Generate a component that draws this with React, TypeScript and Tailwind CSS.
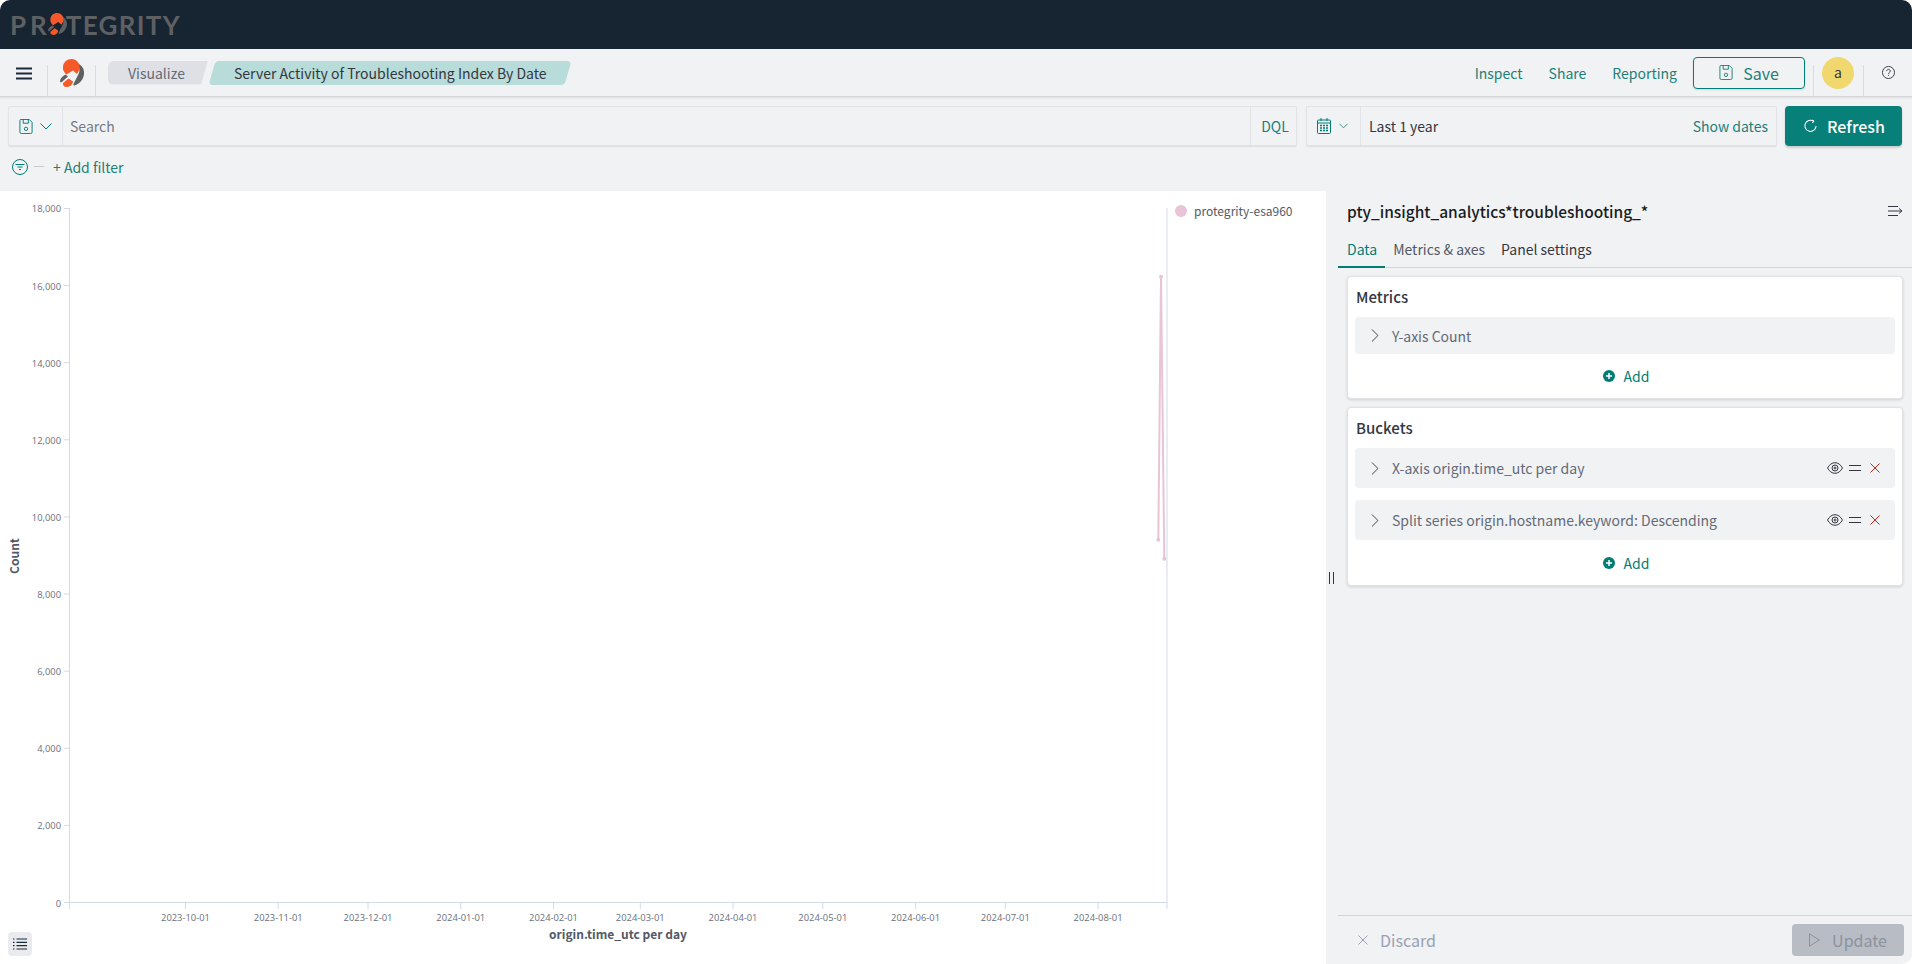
const yTicks = [0, 2000, 4000, 6000, 8000, 10000, 12000, 14000, 16000, 18000];

const xTicks = [
  { label: '2023-10-01', days: 0 },
  { label: '2023-11-01', days: 31 },
  { label: '2023-12-01', days: 61 },
  { label: '2024-01-01', days: 92 },
  { label: '2024-02-01', days: 123 },
  { label: '2024-03-01', days: 152 },
  { label: '2024-04-01', days: 183 },
  { label: '2024-05-01', days: 213 },
  { label: '2024-06-01', days: 244 },
  { label: '2024-07-01', days: 274 },
  { label: '2024-08-01', days: 305 },
];

const yPos = (v: number) => 902 - (v / 18000) * 694;
const xPos = (d: number) => 185.5 + d * 2.992;

const LogoMark = ({ className }: { className: string }) => (
  <svg viewBox="0 0 24 28" className={className}>
    <path d="M17 4C22 6 24.500 10 24 15C23.500 20 20 25 14.500 26.500C13.500 26.800 13 26 13.500 25L19 14C20 11 19 7 17 4z" fill="#5f6062" />
    <path d="M11.500 0C16.500 0 20 4 19.500 9C19.200 11.500 18 13.500 17 15L13 11.500L6.500 15.500C4 13.500 2.500 11 3 7.500C3.500 3 7 0 11.500 0z" fill="#f5592a" />
    <path d="M5.500 15.500L8 17.500L1.800 23C.5 24-.3 22.500.2 21C.8 19 3 17 5.500 15.500z" fill="#5f6062" />
    <path d="M3 24L8.500 19.500L13 22.500C12.500 25.500 10 28 6.500 28C4 28 2.500 26 3 24z" fill="#f5592a" />
  </svg>
);

const FloppyIcon = ({ className }: { className: string }) => (
  <svg viewBox="0 0 14 16" className={className} fill="none" stroke="currentColor" strokeWidth="1">
    <path d="M.5 1.500a1 1 0 0 1 1-1h9l3 3v10.500a1.500 1.500 0 0 1-1.500 1.500H2a1.500 1.500 0 0 1-1.500-1.500z" />
    <path d="M4 .5v4h5.500v-4" />
    <circle cx="7" cy="10.500" r="1.800" />
  </svg>
);

const ChevronDownThin = ({ className }: { className: string }) => (
  <svg viewBox="0 0 12 7" className={className} fill="none" stroke="currentColor" strokeWidth="1">
    <path d="M.5.5L6 6l5.500-5.500" />
  </svg>
);

const ChevronRightThin = () => (
  <svg viewBox="0 0 8 14" className="w-[8px] h-[13px] text-[#343741] shrink-0" fill="none" stroke="currentColor" strokeWidth="1">
    <path d="M.7.5L7.200 7L.7 13.500" />
  </svg>
);

const CalendarIcon = () => (
  <svg viewBox="0 0 14 16" className="w-[14px] h-[16px]" fill="none" stroke="currentColor" strokeWidth="1">
    <rect x=".5" y="2" width="13" height="13.500" rx="1" />
    <path d="M.5 5h13M4 0v3M10 0v3" />
    <path d="M3 7.500h2M6 7.500h2M9 7.500h2M3 10h2M6 10h2M9 10h2M3 12.500h2M6 12.500h2M9 12.500h2" strokeWidth="1.300" />
  </svg>
);

const RefreshIcon = () => (
  <svg viewBox="0 0 14 14" className="w-[13px] h-[14px]" fill="none" stroke="currentColor" strokeWidth="1.100">
    <path d="M10 1.600A6 6 0 1 0 13 7" />
    <path d="M9 .3l1.500 1.500L9 3.600" />
  </svg>
);

const FilterCircle = () => (
  <svg viewBox="0 0 16 16" className="w-[16px] h-[16px] text-[#017d73]" fill="none" stroke="currentColor" strokeWidth="1">
    <circle cx="8" cy="8" r="7.500" />
    <path d="M3.500 5.500h9M5.500 8h5M7 10.500h2" />
  </svg>
);

const PlusCircle = () => (
  <svg viewBox="0 0 12 12" className="w-[12px] h-[12px]">
    <circle cx="6" cy="6" r="6" fill="#017d73" />
    <path d="M3 6h6M6 3v6" stroke="#fff" strokeWidth="1.500" />
  </svg>
);

const CollapseIcon = () => (
  <svg viewBox="0 0 15 10" className="w-[15px] h-[10px] text-[#343741]" fill="none" stroke="currentColor" strokeWidth="1">
    <path d="M0 .5h10M0 9.500h10M0 5h14M11 2.500L14 5l-3 2.500" />
  </svg>
);

const EyeIcon = () => (
  <svg viewBox="0 0 16 12" className="w-[16px] h-[12px] text-[#343741]" fill="none" stroke="currentColor" strokeWidth="1">
    <path d="M.5 6C2.500 2.500 5 .7 8 .7S13.500 2.500 15.500 6C13.500 9.500 11 11.300 8 11.300S2.500 9.500.5 6z" />
    <circle cx="8" cy="6" r="3" />
    <circle cx="8" cy="6" r="1" />
  </svg>
);

const CrossIcon = ({ className }: { className: string }) => (
  <svg viewBox="0 0 10 10" className={className} fill="none" stroke="currentColor" strokeWidth="1">
    <path d="M.5.5l9 9M9.500.5l-9 9" />
  </svg>
);

const ListIcon = () => (
  <svg viewBox="0 0 14 12" className="w-[14px] h-[12px] text-[#1a2a3a]" fill="none" stroke="currentColor" strokeWidth="1.200">
    <path d="M3.500 1H14M3.500 4.300H14M3.500 7.700H14M3.500 11H14" />
    <path d="M0 1h1.500M0 4.300h1.500M0 7.700h1.500M0 11h1.500" />
  </svg>
);

const AddButton = () => (
  <div className="flex-1 flex items-center justify-center gap-[9px] pl-[1px] text-[#017d73]">
    <PlusCircle />
    <span className="text-[14px] leading-[20px]">Add</span>
  </div>
);

const AggRow = ({ label, detail, actions, height }: { label: string; detail: string; actions?: boolean; height: string }) => (
  <div className={`flex items-center bg-[#f1f2f4] rounded-[4px] pl-[16px] pr-[15px] ${height}`}>
    <ChevronRightThin />
    <span className="ml-[13px] text-[14px] leading-[20px] text-[#646a77]">
      {label} {detail}
    </span>
    {actions && (
      <div className="ml-auto flex items-center">
        <EyeIcon />
        <svg viewBox="0 0 12 6" className="w-[12px] h-[6px] ml-[6px] text-[#343741]" fill="none" stroke="currentColor" strokeWidth="1">
          <path d="M0 .5h12M0 5.500h12" />
        </svg>
        <CrossIcon className="w-[10px] h-[10px] ml-[9px] text-[#bd271e]" />
      </div>
    )}
  </div>
);

export default function App() {
  return (
    <div className="w-[1912px] h-[964px] bg-white overflow-hidden flex flex-col font-['Noto_Sans_CJK_SC',sans-serif] text-[#343741]">
      {/* barra superior */}
      <div className="h-[49px] shrink-0 bg-[#172431] rounded-t-[10px] flex items-center pl-[10px] text-[#5f6062] font-['Lato',sans-serif] font-bold text-[26px] leading-none">
        <span className="tracking-[4px]">PR</span>
        <LogoMark className="w-[19px] h-[22px] -ml-[3px] -mt-[1px]" />
        <span className="tracking-[1.300px] ml-[-1px]">TEGRITY</span>
      </div>

      <div className="flex-1 min-h-0 flex flex-col bg-[#f1f2f4] rounded-b-[10px]">
        {/* navegacion */}
        <div className="h-[48px] shrink-0 flex items-center border-b border-[#d3d5d9] shadow-[0_1px_2px_rgba(0,0,0,0.08)]">
          <div className="w-[48px] h-[32px] mt-[16px] border-r border-[#d9dce0] flex items-start justify-center pt-[2px] pl-[1px]">
            <svg viewBox="0 0 16 12" className="w-[16px] h-[13px] text-[#1a2a3a]" fill="none" stroke="currentColor" strokeWidth="2">
              <path d="M0 1h16M0 6h16M0 11h16" />
            </svg>
          </div>
          <div className="w-[48px] h-[32px] mt-[16px] border-r border-[#d9dce0] relative">
            <LogoMark className="absolute left-[12px] -top-[6px] w-[24px] h-[28px]" />
          </div>
          <div className="ml-[12px] h-[24px] w-[100px] bg-[#dee0e5] rounded-l-[6px] [clip-path:polygon(0_0,100%_0,93%_100%,0_100%)] flex items-center pl-[20px] text-[14px] leading-[24px] text-[#646a77]">
            Visualize
          </div>
          <div className="ml-[4px] h-[24px] w-[356px] bg-[#b8dcd9] rounded-[4px] -skew-x-[16deg] flex items-center pl-[22px]">
            <span className="skew-x-[16deg] text-[14px] leading-[24px] text-[#343741] whitespace-nowrap">Server Activity of Troubleshooting Index By Date</span>
          </div>

          <div className="ml-auto flex items-center text-[14px] leading-[24px] text-[#1b8079]">
            <span>Inspect</span>
            <span className="ml-[26px]">Share</span>
            <span className="ml-[26px]">Reporting</span>
            <div className="ml-[16px] w-[112px] h-[32px] border border-[#017d73] rounded-[4px] flex items-center justify-center gap-[10px] text-[16px] shadow-[0_1px_2px_rgba(0,0,0,0.12)]">
              <FloppyIcon className="w-[14px] h-[15px]" />
              <span>Save</span>
            </div>
          </div>
          <div className="ml-[8px] w-[1px] h-[32px] mt-[16px] bg-[#d9dce0]" />
          <div className="ml-[8px] w-[32px] h-[32px] rounded-full bg-[#f0d86e] flex items-center justify-center text-[14px] text-[#343741]">a</div>
          <div className="ml-[9px] w-[1px] h-[32px] mt-[16px] bg-[#d9dce0]" />
          <div className="w-[48px] flex justify-center">
            <svg viewBox="0 0 14 14" className="w-[13px] h-[13px] text-[#343741]" fill="none" stroke="currentColor" strokeWidth="1">
              <circle cx="7" cy="7" r="6.500" />
              <path d="M5 5.500C5 4.300 6 3.700 7 3.700s2 .6 2 1.700c0 1.400-2 1.500-2 3M7 9.500v1" />
            </svg>
          </div>
        </div>

        {/* barra de busqueda */}
        <div className="h-[49px] shrink-0 pt-[9px] pl-[8px] pr-[10px] flex items-start">
          <div className="w-[1289px] h-[40px] flex items-stretch border border-[#e0e3e8] shadow-[0_1px_1px_rgba(0,0,0,0.08)] rounded-[2px] text-[14px] leading-[20px]">
            <div className="w-[54px] border-r border-[#e0e3e8] flex items-center pl-[10px] gap-[7px] text-[#017d73]">
              <FloppyIcon className="w-[14px] h-[15px]" />
              <ChevronDownThin className="w-[12px] h-[7px]" />
            </div>
            <div className="flex-1 flex items-center pl-[7px] pb-[1px] text-[#747a85]">Search</div>
            <div className="w-[46px] border-l border-[#e0e3e8] flex items-center justify-center pl-[3px] pb-[1px] text-[#1b8079]">DQL</div>
          </div>
          <div className="ml-[9px] w-[471px] h-[40px] flex items-stretch border border-[#e0e3e8] shadow-[0_1px_1px_rgba(0,0,0,0.08)] rounded-[2px] text-[14px] leading-[20px]">
            <div className="w-[54px] border-r border-[#e0e3e8] flex items-center pl-[10px] gap-[8px] text-[#017d73]">
              <CalendarIcon />
              <ChevronDownThin className="w-[9px] h-[6px]" />
            </div>
            <div className="flex-1 flex items-center justify-between pl-[8px] pr-[8px] pb-[1px]">
              <span>Last 1 year</span>
              <span className="text-[#1b8079]">Show dates</span>
            </div>
          </div>
          <div className="ml-[8px] w-[117px] h-[40px] bg-[#07807a] rounded-[4px] flex items-center justify-center gap-[10px] pl-[2px] text-white text-[16px] font-medium shadow-[0_2px_2px_rgba(0,0,0,0.15)]">
            <RefreshIcon />
            <span>Refresh</span>
          </div>
        </div>

        {/* filtros */}
        <div className="h-[45px] shrink-0 flex items-center pl-[12px] pb-[4px]">
          <FilterCircle />
          <div className="ml-[6px] w-[10px] h-[1px] bg-[#c8ccd2]" />
          <span className="ml-[9px] text-[14px] leading-[20px] text-[#1b8079]">+ Add filter</span>
        </div>

        {/* contenido */}
        <div className="flex-1 min-h-0 flex">
          <div className="w-[1326px] relative bg-white rounded-bl-[10px]">
            <svg viewBox="0 191 1326 773" className="w-[1326px] h-[773px] block">
              <g stroke="#d3dae6" strokeWidth="1" fill="none">
                <path d="M69.500 208v701M69.500 902.500H1167M1167 208v701" />
                {yTicks.map((v) => (
                  <path key={v} d={`M64 ${yPos(v) + 0.5}h5.500`} />
                ))}
                {xTicks.map((t) => (
                  <path key={t.label} d={`M${xPos(t.days)} 902v7`} />
                ))}
              </g>
              <g fontSize="9.400" fill="#69707d" fontFamily="'Open Sans', sans-serif">
                {yTicks.map((v) => (
                  <text key={v} x="61" y={yPos(v) + (v === 18000 ? 3.5 : 4.5)} textAnchor="end">
                    {v.toLocaleString('en-US')}
                  </text>
                ))}
                {xTicks.map((t) => (
                  <text key={t.label} x={xPos(t.days)} y="920.500" textAnchor="middle">
                    {t.label}
                  </text>
                ))}
              </g>
              <g fontSize="12" fontWeight="700" fill="#535966" fontFamily="'Noto Sans CJK SC', sans-serif">
                <text x="618" y="939" textAnchor="middle">origin.time_utc per day</text>
                <text transform="translate(19 556) rotate(-90)" textAnchor="middle">Count</text>
              </g>
              <polyline points="1158.300,539.700 1161,276.700 1164.300,558.700" fill="none" stroke="#e8c4d6" strokeWidth="2" />
              <g fill="#e8c4d6">
                <circle cx="1158.300" cy="539.700" r="2" />
                <circle cx="1161" cy="276.700" r="2" />
                <circle cx="1164.300" cy="558.700" r="2" />
              </g>
            </svg>
            <div className="absolute left-[1175px] top-[11px] flex items-center gap-[7px] text-[12px] leading-[18px] text-[#535966]">
              <span className="w-[12px] h-[12px] rounded-full bg-[#e8c4d6]" />
              <span>protegrity-esa960</span>
            </div>
            <div className="absolute left-[8px] bottom-[8px] w-[24px] h-[24px] rounded-[4px] bg-[#e9ebee] flex items-center justify-center">
              <ListIcon />
            </div>
          </div>

          {/* separador */}
          <div className="w-[12px] shrink-0 pt-[381px] pl-[3px]">
            <div className="w-[5px] h-[12px] border-x border-[#343741]" />
          </div>

          {/* panel derecho */}
          <div className="flex-1 min-w-0 flex flex-col">
            <div className="h-[40px] shrink-0 flex items-center justify-between pl-[9px] pr-[9px]">
              <span className="text-[15.500px] leading-[24px] font-medium text-[#1a1c21]">pty_insight_analytics*troubleshooting_*</span>
              <CollapseIcon />
            </div>
            <div className="h-[37px] shrink-0 flex items-stretch border-b border-[#d3d5d9] text-[14px]">
              <div className="pl-[9px] pr-[8px] pt-[8px] text-[#017d73] border-b-2 border-[#017d73] -mb-[1px]">Data</div>
              <div className="px-[8px] pt-[8px] text-[#535966]">Metrics &amp; axes</div>
              <div className="px-[8px] pt-[8px] text-[#343741]">Panel settings</div>
            </div>
            <div className="mx-[9px] mt-[8px] h-[123px] shrink-0 bg-white rounded-[4px] border border-[#e0e2e6] shadow-[0_1px_3px_rgba(0,0,0,0.14)] pl-[8px] pr-[7px] flex flex-col">
              <div className="h-[40px] shrink-0 flex items-center -ml-[1px] pl-[1px] text-[15px] leading-[24px] font-medium">Metrics</div>
              <div className="-ml-[1px]">
                <AggRow label="Y-axis" detail="Count" height="h-[37px]" />
              </div>
              <AddButton />
            </div>
            <div className="mx-[9px] mt-[8px] h-[179px] shrink-0 bg-white rounded-[4px] border border-[#e0e2e6] shadow-[0_1px_3px_rgba(0,0,0,0.14)] pl-[8px] pr-[7px] flex flex-col">
              <div className="h-[40px] shrink-0 flex items-center -ml-[1px] pl-[1px] text-[15px] leading-[24px] font-medium">Buckets</div>
              <div className="-ml-[1px]">
                <AggRow label="X-axis" detail="origin.time_utc per day" actions height="h-[40px]" />
                <div className="h-[12px]" />
                <AggRow label="Split series" detail="origin.hostname.keyword: Descending" actions height="h-[40px]" />
              </div>
              <AddButton />
            </div>
            <div className="mt-auto h-[49px] shrink-0 border-t border-[#d3d5d9] flex items-center justify-between pl-[20px] pr-[8px]">
              <div className="flex items-center gap-[12px] text-[#98a2b3] text-[16px] leading-[22px]">
                <CrossIcon className="w-[10px] h-[10px]" />
                <span>Discard</span>
              </div>
              <div className="w-[112px] h-[32px] rounded-[4px] bg-[#b8bdc5] flex items-center justify-center gap-[12px] text-[#8b929e] text-[16px] leading-[22px]">
                <svg viewBox="0 0 11 14" className="w-[11px] h-[14px]" fill="none" stroke="currentColor" strokeWidth="1">
                  <path d="M.5.8L10.300 7L.5 13.200z" />
                </svg>
                <span>Update</span>
              </div>
            </div>
          </div>
        </div>
      </div>
    </div>
  );
}
